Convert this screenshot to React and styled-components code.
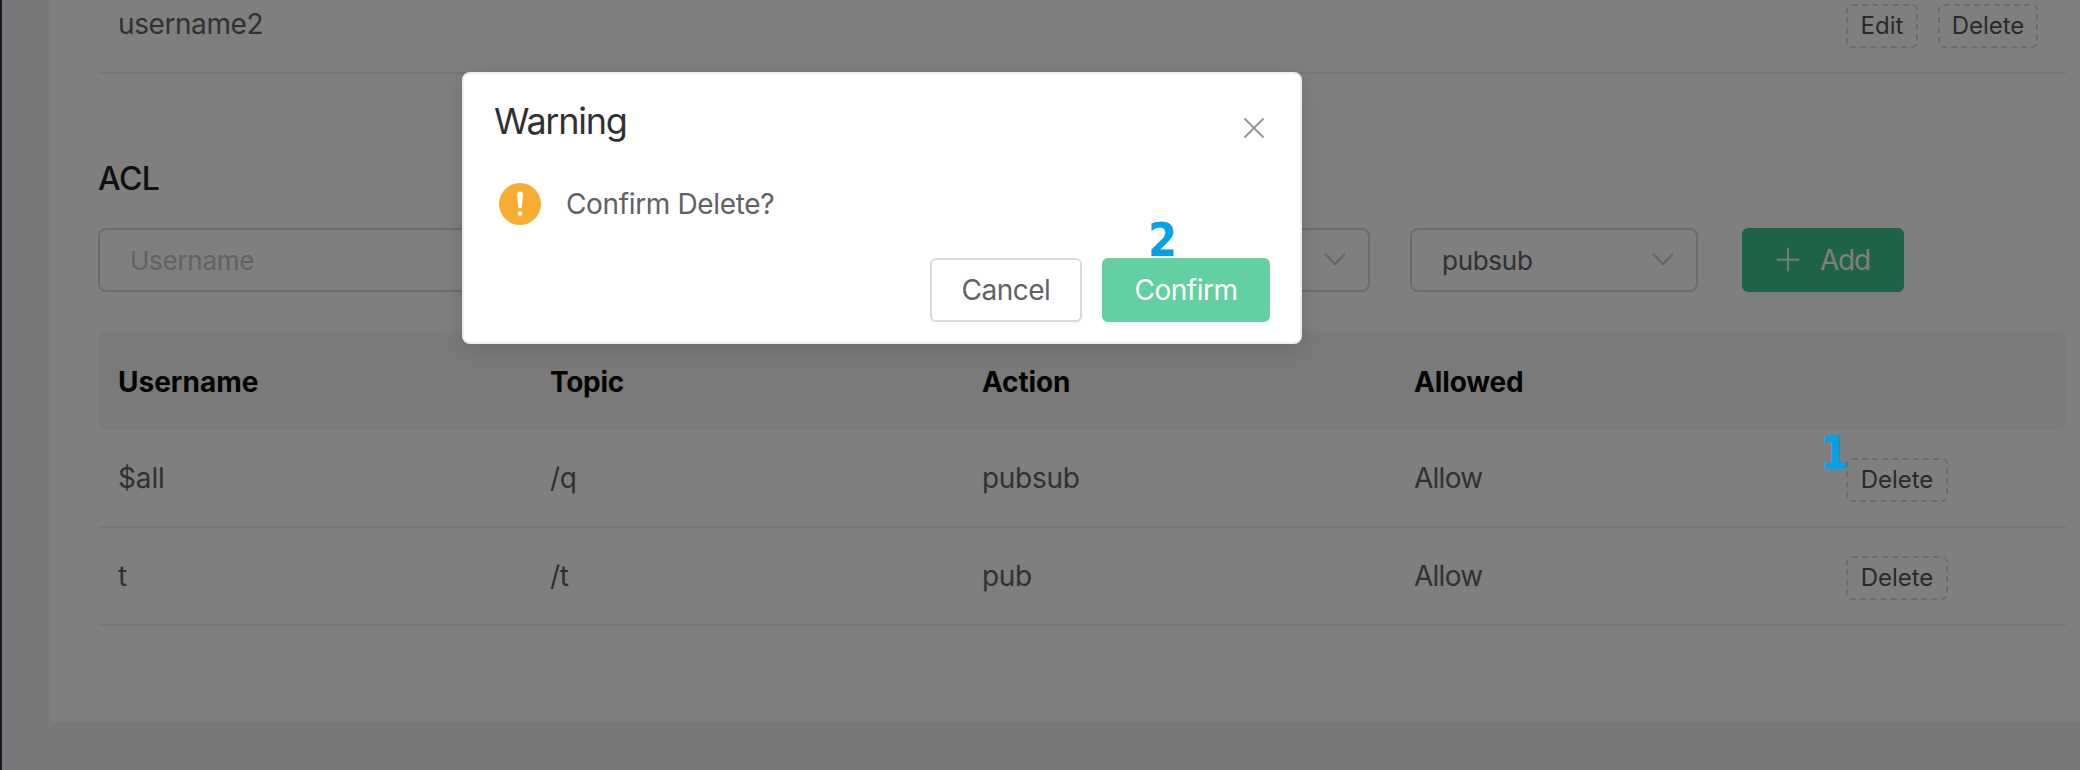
import React from "react";
import styled, { createGlobalStyle } from "styled-components";

const GlobalStyle = createGlobalStyle`
  * { box-sizing: border-box; }
  html, body { margin: 0; height: 100%; overflow: hidden; }
  body {
    font-family: Inter, "Liberation Sans", sans-serif;
    font-size: 28px;
    color: #606266;
    background: #f0f2f6;
  }
  button { font-family: inherit; margin: 0; padding: 0; }
`;

const Page = styled.div`
  position: relative;
  display: flex;
  align-items: flex-start;
  width: 100%;
  height: 770px;
  overflow: hidden;
`;

const SidebarEdge = styled.div`
  flex: none;
  width: 2px;
  height: 100%;
  background: #2e3046;
`;

const Card = styled.main`
  flex: none;
  width: 2064px;
  height: 746px;
  margin: -24px 0 0 48px;
  padding: 0 48px;
  background: #fff;
  border-radius: 4px;
`;

const Row = styled.div`
  display: grid;
  grid-template-columns: repeat(4, 432px) 240px;
  align-items: center;
  height: 98px;
  border-bottom: 2px solid #ececf6;
`;

const HeadRow = styled(Row)`
  border-bottom: none;
  border-radius: 8px;
  background: #f5f5f5;
  color: #0a0a0a;
  font-weight: 700;
  padding-top: 2px;
`;

const Cell = styled.div`
  padding-left: 20px;
  line-height: 40px;
  white-space: nowrap;
  letter-spacing: ${(p) => p.$tracking || 0}px;
`;

const Actions = styled(Cell)`
  display: flex;
  gap: 20px;
  padding-top: 4px;
`;

const SmallButton = styled.button`
  width: ${(p) => p.$width}px;
  height: 44px;
  border: 2px dashed #d9d9d9;
  border-radius: 6px;
  background: transparent;
  color: #545454;
  font-size: 24px;
  line-height: 40px;
`;

const Heading = styled.h2`
  margin: 85px 0 29px;
  font-size: 32px;
  font-weight: 500;
  line-height: 40px;
  letter-spacing: -0.6px;
  color: #222;
`;

const Form = styled.div`
  display: flex;
  gap: 40px;
  margin-bottom: 40px;
`;

const Field = styled.div`
  display: flex;
  align-items: center;
  justify-content: space-between;
  width: ${(p) => p.$width}px;
  height: 64px;
  padding: 0 19px 0 30px;
  border: 2px solid #d9d9d9;
  border-radius: 8px;
  font-size: 26px;
  letter-spacing: -0.28px;
  color: ${(p) => (p.$placeholder ? "#c0c4cc" : "#606266")};
`;

const Button = styled.button`
  display: flex;
  align-items: center;
  justify-content: center;
  width: ${(p) => p.$width}px;
  height: 64px;
  border: 2px solid ${(p) => p.$border || p.$fill};
  border-radius: 6px;
  background: ${(p) => p.$fill};
  color: ${(p) => p.$color || "#fff"};
  font-size: 28px;
  letter-spacing: -0.5px;
  box-shadow: 0 4px 2px rgba(0, 0, 0, 0.02);
`;

const AddButton = styled(Button)`
  justify-content: flex-start;
  gap: 18px;
  margin-left: 4px;
  padding-left: 30px;
  letter-spacing: -1.2px;
`;

const Overlay = styled.div`
  position: absolute;
  inset: 0;
  display: flex;
  align-items: flex-start;
  padding: 72px 0 0 462px;
  background: rgba(0, 0, 0, 0.5);
`;

const Dialog = styled.section`
  display: flex;
  flex-direction: column;
  width: 840px;
  height: 272px;
  padding: 29px 30px 20px 30px;
  border: 2px solid #ebeef5;
  border-radius: 8px;
  background: #fff;
  box-shadow: 0 4px 24px rgba(0, 0, 0, 0.12);
`;

const DialogHeader = styled.header`
  display: flex;
  justify-content: space-between;
  align-items: flex-start;
  height: 80px;
`;

const DialogTitle = styled.h1`
  margin: 0;
  font-size: 36px;
  font-weight: 400;
  line-height: 36px;
  letter-spacing: -1.25px;
  color: #303133;
`;

const CloseIcon = styled.svg`
  margin: 9px 0 0;
`;

const DialogBody = styled.div`
  display: flex;
  align-items: center;
  gap: 25px;
  height: 42px;
  padding-left: 5px;
  letter-spacing: -0.35px;
`;

const DialogFooter = styled.footer`
  display: flex;
  justify-content: flex-end;
  gap: 20px;
  margin-top: auto;
`;

const StepMark = styled.span`
  position: absolute;
  left: ${(p) => p.$x}px;
  top: ${(p) => p.$y}px;
  font: 700 46px/46px "DejaVu Sans Condensed", "DejaVu Sans", sans-serif;
  color: #00a2e8;
`;

const Chevron = () => (
  <svg width="28" height="28" viewBox="0 0 28 28" fill="none" stroke="#c0c4cc" strokeWidth="1.8" strokeLinecap="round" strokeLinejoin="round">
    <path d="M4.500 8.200 14 18l9.500-9.800" />
  </svg>
);

const Plus = () => (
  <svg width="28" height="28" viewBox="0 0 28 28" stroke="#fff" strokeWidth="1.7" strokeLinecap="round">
    <path d="M3.500 13.700h21M14 2.700v22" />
  </svg>
);

const Close = () => (
  <CloseIcon width="32" height="32" viewBox="0 0 32 32" stroke="#909399" strokeWidth="1.9" strokeLinecap="round">
    <path d="M7 7l18 18M25 7L7 25" />
  </CloseIcon>
);

const Warning = () => (
  <svg width="42" height="42" viewBox="0 0 42 42">
    <circle cx="21" cy="21" r="21" fill="#f9ad30" />
    <path d="M17.900 11.800a3 3 0 0 1 6.200 0l-1.200 11.600a1.900 1.900 0 0 1-3.800 0z" fill="#fff" />
    <circle cx="21" cy="30.600" r="2.300" fill="#fff" />
  </svg>
);

const rules = [
  { user: "$all", topic: "/q", action: "pubsub", allowed: "Allow" },
  { user: "t", topic: "/t", action: "pub", allowed: "Allow" },
];

export default function App() {
  return (
    <Page>
      <GlobalStyle />
      <SidebarEdge />
      <Card>
        <Row>
          <Cell $tracking={-0.42}>username2</Cell>
          <Cell />
          <Cell />
          <Cell />
          <Actions>
            <SmallButton $width={72}>Edit</SmallButton>
            <SmallButton $width={100}>Delete</SmallButton>
          </Actions>
        </Row>
        <Heading>ACL</Heading>
        <Form>
          <Field $width={472} $placeholder>Username</Field>
          <Field $width={432} $placeholder>Topic</Field>
          <Field $width={288}>
            Allow
            <Chevron />
          </Field>
          <Field $width={288}>
            pubsub
            <Chevron />
          </Field>
          <AddButton $width={162} $fill="#3ec68c">
            <Plus />
            Add
          </AddButton>
        </Form>
        <HeadRow>
          <Cell>Username</Cell>
          <Cell $tracking={-0.3}>Topic</Cell>
          <Cell $tracking={-0.15}>Action</Cell>
          <Cell $tracking={-0.15}>Allowed</Cell>
        </HeadRow>
        {rules.map((rule) => (
          <Row key={rule.user}>
            <Cell $tracking={-0.15}>{rule.user}</Cell>
            <Cell $tracking={-0.4}>{rule.topic}</Cell>
            <Cell $tracking={-0.3}>{rule.action}</Cell>
            <Cell $tracking={-0.75}>{rule.allowed}</Cell>
            <Actions>
              <SmallButton $width={102}>Delete</SmallButton>
            </Actions>
          </Row>
        ))}
      </Card>
      <Overlay>
        <Dialog role="dialog">
          <DialogHeader>
            <DialogTitle>Warning</DialogTitle>
            <Close />
          </DialogHeader>
          <DialogBody>
            <Warning />
            Confirm Delete?
          </DialogBody>
          <DialogFooter>
            <Button $width={152} $fill="#fff" $border="#d9d9d9" $color="#606266">Cancel</Button>
            <Button $width={168} $fill="#64cfa3">Confirm</Button>
          </DialogFooter>
        </Dialog>
      </Overlay>
      <StepMark $x={1820} $y={430}>1</StepMark>
      <StepMark $x={1148} $y={217}>2</StepMark>
    </Page>
  );
}
